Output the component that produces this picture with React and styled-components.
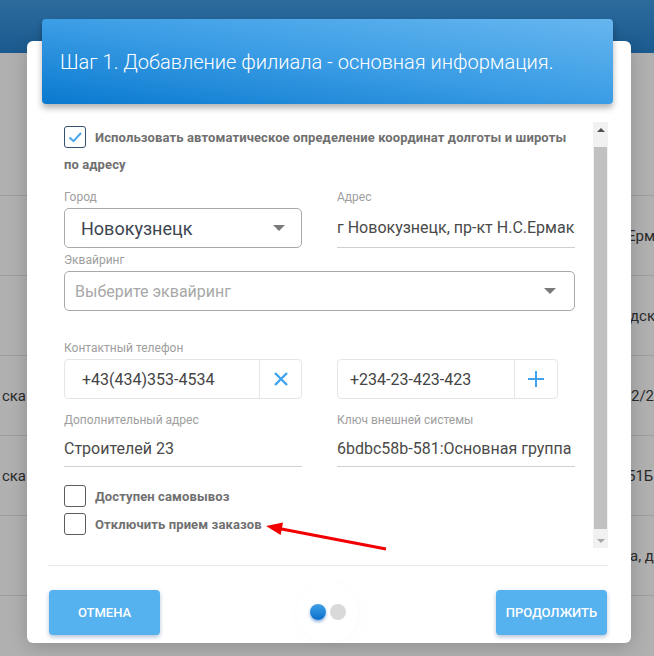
import React from 'react'
import styled, { createGlobalStyle } from 'styled-components'

const GlobalStyle = createGlobalStyle`
  html, body {
    margin: 0;
    padding: 0;
  }
  body {
    font-family: Roboto, "Liberation Sans", sans-serif;
    background: #b0b0b0;
  }
`

const Page = styled.div`
  position: relative;
  width: 654px;
  height: 656px;
  overflow: hidden;
  background: #b0b0b0;
`

const TopBar = styled.div`
  height: 53px;
  background: linear-gradient(180deg, #2c6b9c 0%, #1b5a8f 100%);
`

const Table = styled.div`
  padding-top: 142px;
`

const Row = styled.div`
  display: grid;
  grid-template-columns: 26px 601px 1fr;
  height: 79px;
  border-top: 1px solid #9e9e9e;
  align-items: center;
  font-size: 15px;
  color: #2a2a2a;
`

const LeftCell = styled.div`
  text-align: right;
  white-space: nowrap;
  overflow: hidden;
`

const RightCell = styled.div`
  white-space: nowrap;
  overflow: hidden;
  padding-left: ${p => p.indent || 0}px;
`

const Modal = styled.div`
  position: absolute;
  top: 41px;
  left: 27px;
  width: 604px;
  height: 602px;
  background: #fff;
  border-radius: 6px;
  box-shadow: 0 4px 18px rgba(0, 0, 0, 0.18);
  display: flex;
  flex-direction: column;
`

const Header = styled.div`
  margin: -22px 18px 0 15px;
  height: 85px;
  flex: none;
  border-radius: 4px;
  background: linear-gradient(188deg, #66b6ef 0%, #3b9de5 50%, #0a79cf 100%);
  box-shadow: 0 4px 6px rgba(0, 0, 0, 0.3);
  display: flex;
  align-items: center;
  padding-left: 18px;
  color: #fff;
  font-size: 20px;
  font-weight: 300;
`

const Body = styled.div`
  margin: 18px 23px 0 21px;
  height: 426px;
  flex: none;
  display: flex;
`

const Scroller = styled.div`
  flex: 1;
  overflow: hidden;
  padding: 2px 18px 0 16px;
`

const ScrollTrack = styled.div`
  width: 15px;
  background: #f1f1f1;
  display: flex;
  flex-direction: column;
  align-items: center;
`

const ScrollButton = styled.div`
  width: 15px;
  height: 15px;
  flex: none;
  display: flex;
  align-items: center;
  justify-content: center;
`

const Arrow = styled.span`
  width: 0;
  height: 0;
  border-left: 4px solid transparent;
  border-right: 4px solid transparent;
  border-${p => (p.up ? 'bottom' : 'top')}: 4px solid ${p => (p.up ? '#505050' : '#a8a8a8')};
`

const ScrollThumb = styled.div`
  width: 13px;
  flex: 1;
  margin: 10px 0 4px;
  background: #c1c1c1;
`

const CheckLine = styled.div`
  font-size: 13px;
  font-weight: 700;
  color: #707070;
  line-height: 27px;
  letter-spacing: 0.12px;
`

const Box = styled.span`
  display: inline-flex;
  vertical-align: middle;
  width: 22px;
  height: 22px;
  box-sizing: border-box;
  border: 1px solid ${p => (p.checked ? '#34506e' : '#5c5c5c')};
  border-radius: 3px;
  margin: -3px 9px 0 0;
  align-items: center;
  justify-content: center;
`

const Grid = styled.div`
  display: grid;
  grid-template-columns: 238px 238px;
  column-gap: 35px;
`

const Field = styled.div`
  margin-top: ${p => p.mt}px;
  grid-column: ${p => (p.wide ? '1 / -1' : 'auto')};
`

const Label = styled.div`
  font-size: 12px;
  line-height: 14px;
  color: #9e9e9e;
  margin-bottom: 4px;
`

const SelectBox = styled.div`
  height: 40px;
  box-sizing: border-box;
  border: 1px solid #a9a9a9;
  border-radius: 5px;
  display: flex;
  align-items: center;
  justify-content: space-between;
  padding: 0 ${p => p.pr}px 0 ${p => p.pl}px;
  font-size: ${p => p.size}px;
  color: ${p => (p.placeholder ? '#a8a8a8' : '#3c4650')};
`

const Caret = styled.span`
  width: 0;
  height: 0;
  border-left: 6px solid transparent;
  border-right: 6px solid transparent;
  border-top: 6px solid #7a7a7a;
`

const LineInput = styled.div`
  height: ${p => p.h}px;
  box-sizing: border-box;
  border-bottom: 1px solid #d0d0d0;
  display: flex;
  align-items: center;
  font-size: 16px;
  color: #4a4a4a;
  white-space: nowrap;
  overflow: hidden;
`

const InputGroup = styled.div`
  display: flex;
  width: ${p => p.w}px;
  height: 40px;
  box-sizing: border-box;
  border: 1px solid #e6e6e6;
  border-radius: 4px;
`

const GroupText = styled.div`
  flex: 1;
  display: flex;
  align-items: center;
  padding-left: ${p => p.pl}px;
  font-size: 16px;
  color: #444;
`

const GroupAddon = styled.div`
  width: ${p => p.w}px;
  border-left: 1px solid #e6e6e6;
  display: flex;
  align-items: center;
  justify-content: center;
`

const Checks = styled.div`
  margin-top: 18px;
  display: flex;
  flex-direction: column;
  gap: 6px;
`

const CheckRow = styled.div`
  display: flex;
  align-items: center;
  font-size: 13px;
  font-weight: 700;
  color: #707070;
  letter-spacing: 0.12px;

  ${Box} {
    margin: 0 9px 0 0;
  }
`

const Divider = styled.div`
  margin: 17px 23px 0 21px;
  height: 1px;
  flex: none;
  background: #e9e9e9;
`

const Footer = styled.div`
  display: flex;
  align-items: center;
  justify-content: space-between;
  padding: 16px 24px 0 22px;
`

const Button = styled.button`
  width: 111px;
  height: 45px;
  border: none;
  border-radius: 4px;
  background: #56b1ef;
  color: #fff;
  font-family: Roboto, "Liberation Sans", sans-serif;
  font-weight: 500;
  font-size: 13px;
  text-transform: uppercase;
  box-shadow: 0 2px 4px rgba(30, 80, 140, 0.35);
`

const Dots = styled.div`
  display: flex;
  gap: 4px;
  padding: 22px 12px;
  border-radius: 50%;
  box-shadow: 2px 4px 22px rgba(0, 0, 0, 0.02);
`

const Dot = styled.span`
  width: 16px;
  height: 16px;
  border-radius: 50%;
  background: ${p => (p.active ? 'linear-gradient(180deg, #3fa0e8, #0b6fc8)' : '#d9d9d9')};
  box-shadow: ${p => (p.active ? '0 2px 3px rgba(10, 90, 190, 0.45)' : 'none')};
`

const Annotation = styled.svg`
  position: absolute;
  left: 0;
  top: 0;
  pointer-events: none;
`

const XIcon = () => (
  <svg width="16" height="16" viewBox="0 0 16 16">
    <path d="M2 2 L14 14 M14 2 L2 14" stroke="#3fa3f0" strokeWidth="2.4" fill="none" />
  </svg>
)

const PlusIcon = () => (
  <svg width="18" height="18" viewBox="0 0 18 18">
    <path d="M9 1 V17 M1 9 H17" stroke="#3fa3f0" strokeWidth="2" fill="none" />
  </svg>
)

const Check = () => (
  <svg width="18" height="18" viewBox="0 0 18 18">
    <path d="M3.5 9.5 L7.5 13.2 L15 5" stroke="#4aa6ea" strokeWidth="2" fill="none" />
  </svg>
)

const rows = [
  { left: '', right: 'Ерма', indent: 0 },
  { left: '', right: 'дск', indent: 3 },
  { left: 'ска', right: '2/2', indent: 4 },
  { left: 'ска', right: '51Б', indent: 0 },
  { left: '', right: 'а, д', indent: 3 },
  { left: '', right: '', indent: 0 }
]

export default function App() {
  return (
    <Page>
      <GlobalStyle />
      <TopBar />
      <Table>
        {rows.map((r, i) => (
          <Row key={i}>
            <LeftCell>{r.left}</LeftCell>
            <span />
            <RightCell indent={r.indent}>{r.right}</RightCell>
          </Row>
        ))}
      </Table>

      <Modal>
        <Header>Шаг 1. Добавление филиала - основная информация.</Header>

        <Body>
          <Scroller>
            <CheckLine>
              <Box checked>
                <Check />
              </Box>
              Использовать автоматическое определение координат долготы и широты по адресу
            </CheckLine>

            <Grid>
              <Field mt={12}>
                <Label>Город</Label>
                <SelectBox pl={16} pr={16} size={18}>
                  Новокузнецк
                  <Caret />
                </SelectBox>
              </Field>
              <Field mt={12}>
                <Label>Адрес</Label>
                <LineInput h={40}>г Новокузнецк, пр-кт Н.С.Ермакова, 12</LineInput>
              </Field>

              <Field mt={5} wide>
                <Label>Эквайринг</Label>
                <SelectBox pl={10} pr={18} size={16} placeholder>
                  Выберите эквайринг
                  <Caret />
                </SelectBox>
              </Field>

              <Field mt={30}>
                <Label>Контактный телефон</Label>
                <InputGroup w={238}>
                  <GroupText pl={17}>+43(434)353-4534</GroupText>
                  <GroupAddon w={41}>
                    <XIcon />
                  </GroupAddon>
                </InputGroup>
              </Field>
              <Field mt={30}>
                <Label>&nbsp;</Label>
                <InputGroup w={221}>
                  <GroupText pl={12}>+234-23-423-423</GroupText>
                  <GroupAddon w={42}>
                    <PlusIcon />
                  </GroupAddon>
                </InputGroup>
              </Field>

              <Field mt={14}>
                <Label>Дополнительный адрес</Label>
                <LineInput h={36}>Строителей 23</LineInput>
              </Field>
              <Field mt={14}>
                <Label>Ключ внешней системы</Label>
                <LineInput h={36}>6bdbc58b-581:Основная группа</LineInput>
              </Field>
            </Grid>

            <Checks>
              <CheckRow>
                <Box />
                Доступен самовывоз
              </CheckRow>
              <CheckRow>
                <Box />
                Отключить прием заказов
              </CheckRow>
            </Checks>
          </Scroller>

          <ScrollTrack>
            <ScrollButton>
              <Arrow up />
            </ScrollButton>
            <ScrollThumb />
            <ScrollButton>
              <Arrow />
            </ScrollButton>
          </ScrollTrack>
        </Body>

        <Divider />

        <Footer>
          <Button>Отмена</Button>
          <Dots>
            <Dot active />
            <Dot />
          </Dots>
          <Button>Продолжить</Button>
        </Footer>
      </Modal>

      <Annotation width="654" height="656">
        <line x1="386" y1="549" x2="279" y2="528.5" stroke="#f20000" strokeWidth="3" />
        <polygon points="266,526 283,522.6 280.6,535" fill="#f20000" />
      </Annotation>
    </Page>
  )
}
